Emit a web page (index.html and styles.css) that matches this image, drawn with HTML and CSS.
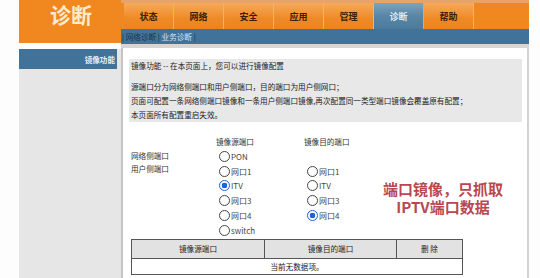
FILE: index.html
```html
<!DOCTYPE html>
<html lang="zh-CN">
<head>
    <meta charset="UTF-8">
    <meta name="viewport" content="width=device-width, initial-scale=1.0">
    <title>诊断 - 镜像功能</title>
    <link rel="stylesheet" href="styles.css">
</head>
<body>
    <div class="frame">
        <div class="logo-cell">
            <div class="logo">诊断</div>
        </div>
        <div class="nav">
            <div class="tabs">
                <div class="tab">状态</div>
                <div class="tab">网络</div>
                <div class="tab">安全</div>
                <div class="tab">应用</div>
                <div class="tab">管理</div>
                <div class="tab active">诊断</div>
                <div class="tab">帮助</div>
            </div>
            <div class="subbar">
                | <span class="sub-on">网络诊断</span> | <span class="sub-off">业务诊断</span> |
            </div>
        </div>

        <div class="sidebar">
            <div class="side-item">镜像功能</div>
        </div>

        <div class="content">
            <div class="info">
                <p>镜像功能 -- 在本页面上，您可以进行镜像配置</p>
                <p class="gap">源端口分为网络侧端口和用户侧端口，目的端口为用户侧网口；</p>
                <p>页面可配置一条网络侧端口镜像和一条用户侧端口镜像,再次配置同一类型端口镜像会覆盖原有配置；</p>
                <p>本页面所有配置重启失效。</p>
            </div>

            <div class="form">
                <div class="col labels">
                    <div class="head"></div>
                    <div class="lbl">网络侧端口</div>
                    <div class="lbl">用户侧端口</div>
                </div>
                <div class="col src">
                    <div class="head">镜像源端口</div>
                    <label class="opt"><input type="radio" name="src">PON</label>
                    <label class="opt"><input type="radio" name="src">网口1</label>
                    <label class="opt"><input type="radio" name="src" checked>ITV</label>
                    <label class="opt"><input type="radio" name="src">网口3</label>
                    <label class="opt"><input type="radio" name="src">网口4</label>
                    <label class="opt"><input type="radio" name="src">switch</label>
                </div>
                <div class="col dst">
                    <div class="head">镜像目的端口</div>
                    <div class="opt"></div>
                    <label class="opt"><input type="radio" name="dst">网口1</label>
                    <label class="opt"><input type="radio" name="dst">ITV</label>
                    <label class="opt"><input type="radio" name="dst">网口3</label>
                    <label class="opt"><input type="radio" name="dst" checked>网口4</label>
                </div>
            </div>

            <table class="list">
                <tr>
                    <th class="c1">镜像源端口</th>
                    <th class="c2">镜像目的端口</th>
                    <th class="c3">删 除</th>
                </tr>
                <tr>
                    <td colspan="3">当前无数据项。</td>
                </tr>
            </table>

            <div class="note">
                <div>端口镜像，只抓取</div>
                <div>IPTV端口数据</div>
            </div>
        </div>
    </div>
</body>
</html>
```

FILE: styles.css
```css
body {
    margin: 0;
    background: #fdfdfd;
    font-family: "Noto Sans CJK SC", "Liberation Sans", sans-serif;
    color: #222;
    width: 540px;
    height: 278px;
    overflow: hidden;
}
.frame {
    margin-left: 19px;
    width: 510px;
    display: grid;
    grid-template-columns: 102px 1fr;
    grid-template-rows: 48px 230px;
}
.logo-cell {
    background: #fdfdfd;
}
.logo {
    height: 43px;
    background: #f0871f;
    color: #fbeacb;
    font-size: 21px;
    font-weight: bold;
    text-align: center;
    line-height: 28px;
    padding-left: 2px;
    box-sizing: border-box;
}
.nav {
    background: #f0871f;
    border-bottom: 4px solid #d6d6d6;
    display: flex;
    flex-direction: column;
}
.tabs {
    display: flex;
    height: 26px;
    margin-top: 3px;
    padding-left: 3px;
    box-shadow: 0 -3px 0 #e7a46a;
}
.tab {
    width: 50px;
    background: linear-gradient(#f7aa5a, #ee8a26 60%, #ec8420);
    border-right: 1px solid #f3b06e;
    box-sizing: border-box;
    font-size: 9px;
    font-weight: bold;
    color: #3a1e08;
    text-align: center;
    line-height: 28px;
}
.tab.active {
    background: linear-gradient(#7ca3bd, #5886a6 50%, #4b7a9b);
    color: #dfeaf2;
    border-right-color: #e7a46a;
}
.subbar {
    flex: 1;
    background: #41739a;
    font-size: 7.6px;
    color: #1c2c3a;
    line-height: 15px;
    padding-left: 1px;
}
.sub-on {
    color: #1c3348;
}
.sub-off {
    color: #d4e2ee;
}
.sidebar {
    background: #e6e6e6;
    padding-top: 1px;
    box-shadow: inset 0 1px 0 #fdfdfd;
}
.side-item {
    margin-right: 4px;
    height: 20px;
    background: #41739a;
    color: #e6eef5;
    font-size: 7.6px;
    font-weight: bold;
    text-align: right;
    line-height: 21px;
    padding-right: 2px;
}
.content {
    position: relative;
    background: #fff;
    border-left: 2px solid #c4c4c4;
    border-right: 2px solid #d2d2d2;
    padding: 11px 0 0 6px;
    font-size: 7.6px;
}
.info {
    width: 391px;
    height: 63px;
    background: #e8e8e8;
    padding-left: 2px;
}
.info p {
    margin: 0;
    line-height: 14px;
}
.info .gap {
    margin-top: 7px;
}
.form {
    display: flex;
    margin-top: 13px;
    padding-left: 2px;
}
.col {
    display: flex;
    flex-direction: column;
}
.labels {
    width: 85px;
}
.labels .head {
    height: 14px;
}
.lbl {
    height: 13px;
    line-height: 13px;
    color: #333;
}
.src {
    width: 88px;
}
.head {
    height: 14px;
    line-height: 14px;
    color: #333;
}
.opt {
    height: 14.8px;
    display: flex;
    align-items: center;
    color: #444;
    font-family: "Noto Sans CJK SC", "DejaVu Sans", sans-serif;
    font-size: 8px;
    padding-left: 3px;
}
.opt input {
    appearance: none;
    width: 11px;
    height: 11px;
    margin: 0 1px 0 0;
    border: 1px solid #444;
    border-radius: 50%;
    background: #fff;
    box-sizing: border-box;
}
.opt input:checked {
    border-color: #1b66c9;
    background: radial-gradient(circle, #1b66c9 0 42%, #fff 48%);
}
.list {
    border-collapse: collapse;
    width: 332px;
    margin-left: 2px;
    margin-top: 1px;
    font-size: 7.6px;
    color: #222;
}
.list th,
.list td {
    border: 1.5px solid #555;
    text-align: center;
    font-weight: normal;
    padding: 0;
}
.list th {
    background: #e2e2e2;
    height: 18px;
}
.list td {
    height: 15px;
}
.c1 {
    width: 132px;
}
.c2 {
    width: 131px;
}
.note {
    position: absolute;
    left: 256px;
    top: 132px;
    width: 128px;
    font-size: 15px;
    font-weight: bold;
    line-height: 18px;
    text-align: center;
    color: #b9474f;
    text-shadow: 1px 0 #fff, -1px 0 #fff, 0 1px #fff, 0 -1px #fff, 1px 1px #fff, -1px -1px #fff, 1px -1px #fff, -1px 1px #fff;
}
```
